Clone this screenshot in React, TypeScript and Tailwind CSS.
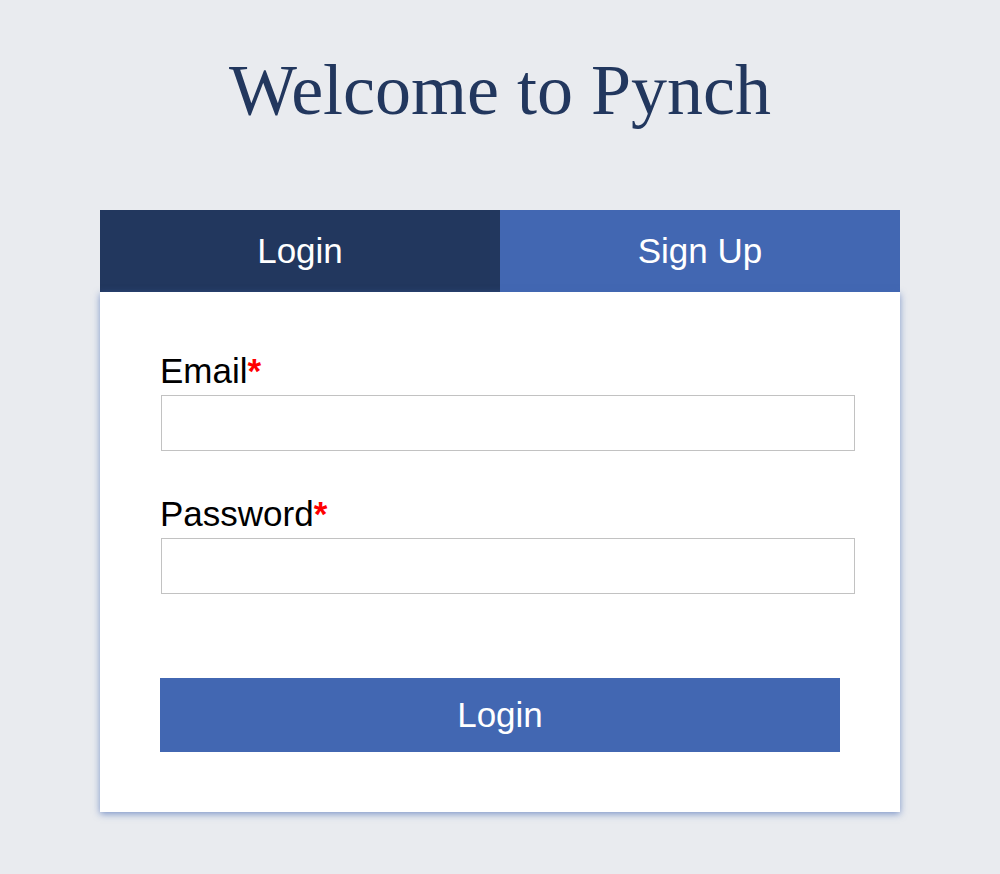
import React from "react";

export default function App() {
  const sans = { fontFamily: '"Liberation Sans", Arial, sans-serif' };
  return (
    <div className="min-h-screen w-full bg-[#e9ebef] flex flex-col items-center pt-[54px]" style={sans}>
      <h1
        className="text-[72px] leading-[72px] text-[#22375e] font-normal"
        style={{ fontFamily: '"Liberation Serif", "Times New Roman", serif' }}
      >
        Welcome to Pynch
      </h1>
      <div className="mt-[84px] w-[800px] flex flex-col">
        <div className="flex h-[82px] text-white text-[35px]">
          <div className="flex-1 bg-[#22375e] flex items-center justify-center">Login</div>
          <div className="flex-1 bg-[#4267b2] flex items-center justify-center">Sign Up</div>
        </div>
        <div className="bg-white pt-[59px] px-[60px] pb-[60px] shadow-[0_2px_7px_rgba(66,103,178,0.65)]">
          <label className="block text-[35px] leading-[40px] text-black mb-1">
            Email<span className="text-[#ff0000] font-bold">*</span>
          </label>
          <input type="email" className="block ml-px w-[694px] h-[56px] border border-[#c2c2c2] bg-white outline-none" />
          <label className="block text-[35px] leading-[40px] text-black mt-[43px] mb-1">
            Password<span className="text-[#ff0000] font-bold">*</span>
          </label>
          <input type="password" className="block ml-px w-[694px] h-[56px] border border-[#c2c2c2] bg-white outline-none" />
          <button className="mt-[84px] w-[680px] h-[74px] bg-[#4267b2] text-white text-[35px] flex items-center justify-center">
            Login
          </button>
        </div>
      </div>
    </div>
  );
}
